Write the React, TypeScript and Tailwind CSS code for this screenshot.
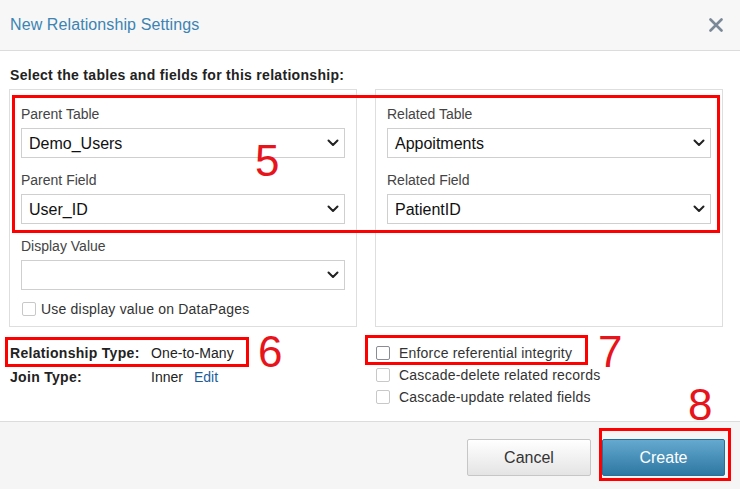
import React from "react";

const Chevron: React.FC = () => (
    <svg width="12" height="8" viewBox="0 0 12 8" className="shrink-0">
        <path d="M1.5 1.5 L6 6 L10.5 1.5" fill="none" stroke="#222" strokeWidth="2" strokeLinecap="round" strokeLinejoin="round" />
    </svg>
);

const Select: React.FC<{ value?: string }> = ({ value }) => (
    <div className="h-[30px] w-full border border-[#cfcfcf] bg-white flex items-center justify-between pl-[7px] pr-[5px]">
        <span className="text-[16px] text-[#111] leading-none pt-px">{value ?? ""}</span>
        <Chevron />
    </div>
);

const Field: React.FC<{ label: string; value?: string; first?: boolean }> = ({ label, value, first }) => (
    <div className={first ? "" : "mt-3"}>
        <div className="text-[14px] leading-5 text-[#444] mb-1">{label}</div>
        <Select value={value} />
    </div>
);

const Check: React.FC<{ label: string; dark?: boolean }> = ({ label, dark }) => (
    <div className="flex items-center h-[22px]">
        <span className={"w-[14px] h-[14px] rounded-[2px] bg-white border " + (dark ? "border-[#8b8b96]" : "border-[#c8c8c8]")} />
        <span className="ml-[9px] text-[14px] text-[#333] tracking-[0.2px]">{label}</span>
    </div>
);

const App: React.FC = () => {
    return (
        <div className="relative w-[740px] h-[489px] bg-white flex flex-col font-['Liberation_Sans',Arial,sans-serif] overflow-hidden">
            {/* header */}
            <div className="h-[51px] shrink-0 bg-[#f7f7f7] border-b border-[#dcdcdc] flex items-center justify-between pl-[10px] pr-[17px]">
                <span className="text-[16px] text-[#3b84b3] tracking-[0.1px]">New Relationship Settings</span>
                <svg width="14" height="14" viewBox="0 0 14 14">
                    <path d="M1.5 1.5 L12.5 12.5 M12.5 1.5 L1.5 12.5" stroke="#7b8898" strokeWidth="2.6" strokeLinecap="round" />
                </svg>
            </div>

            {/* body */}
            <div className="pt-[14px] px-[9px]">
                <div className="ml-px text-[14px] leading-5 font-bold text-[#222] tracking-[0.3px] mb-1">Select the tables and fields for this relationship:</div>
                <div className="grid grid-cols-[348px_348px] gap-x-[18px]">
                    <div className="border border-[#dedede] pt-[14px] px-[11px] pb-[8px]">
                        <Field first label="Parent Table" value="Demo_Users" />
                        <Field label="Parent Field" value="User_ID" />
                        <Field label="Display Value" />
                        <div className="mt-[10px] h-[18px] flex items-center">
                            <span className="w-[14px] h-[14px] rounded-[2px] bg-white border border-[#c8c8c8] ml-px" />
                            <span className="ml-[5px] text-[14px] text-[#333] tracking-[0.2px]">Use display value on DataPages</span>
                        </div>
                    </div>
                    <div className="border border-[#dedede] pt-[14px] px-[11px] pb-[8px]">
                        <Field first label="Related Table" value="Appoitments" />
                        <Field label="Related Field" value="PatientID" />
                    </div>

                    <div className="mt-[14px] ml-px text-[14px] text-[#222]">
                        <div className="flex leading-6">
                            <span className="w-[141px] font-bold tracking-[0.3px]">Relationship Type:</span>
                            <span className="tracking-[0.1px]">One-to-Many</span>
                        </div>
                        <div className="flex leading-6">
                            <span className="w-[141px] font-bold tracking-[0.3px]">Join Type:</span>
                            <span>Inner</span>
                            <span className="ml-[11px] text-[#1c5d9c]">Edit</span>
                        </div>
                    </div>
                    <div className="mt-[15px] ml-px">
                        <Check dark label="Enforce referential integrity" />
                        <Check label="Cascade-delete related records" />
                        <Check label="Cascade-update related fields" />
                    </div>
                </div>
            </div>

            {/* footer */}
            <div className="mt-auto h-[68px] shrink-0 bg-[#f5f5f5] border-t border-[#dcdcdc] flex justify-end items-start pt-[17px] pr-[15px] gap-[11px]">
                <button className="w-[124px] h-[37px] rounded-[2px] border border-[#c6c6c6] bg-gradient-to-b from-white to-[#e4e4e4] text-[16px] text-[#333]">Cancel</button>
                <button className="w-[123px] h-[37px] rounded-[2px] border border-[#2a6f98] bg-gradient-to-b from-[#64a9cf] to-[#2d78a3] text-[16px] text-white">Create</button>
            </div>

            {/* annotations */}
            <div className="absolute left-[12px] top-[95px] w-[708px] h-[138px] border-[3px] border-[#ff0000] pointer-events-none" />
            <div className="absolute left-[5px] top-[337px] w-[244px] h-[30px] border-[3px] border-[#ff0000] pointer-events-none" />
            <div className="absolute left-[365px] top-[335px] w-[223px] h-[30px] border-[3px] border-[#ff0000] pointer-events-none" />
            <div className="absolute left-[599px] top-[428px] w-[132px] h-[53px] border-[3px] border-[#ff0000] pointer-events-none" />
            <div className="absolute left-[255px] top-[139px] text-[44px] leading-[44px] text-[#e8141c]">5</div>
            <div className="absolute left-[258px] top-[330px] text-[44px] leading-[44px] text-[#e8141c]">6</div>
            <div className="absolute left-[598px] top-[330px] text-[44px] leading-[44px] text-[#e8141c]">7</div>
            <div className="absolute left-[688px] top-[383px] text-[44px] leading-[44px] text-[#e8141c]">8</div>
        </div>
    );
};

export default App;
